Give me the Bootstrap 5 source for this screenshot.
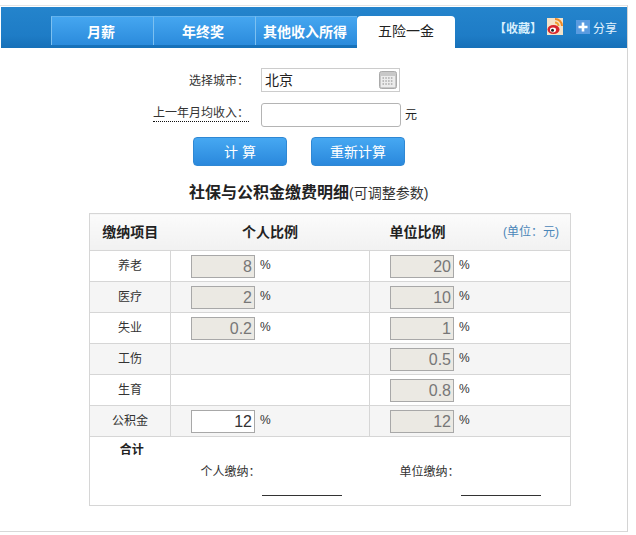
<!DOCTYPE html>
<html lang="zh-CN">
<head>
<meta charset="utf-8">
<title>五险一金</title>
<link href="https://cdn.jsdelivr.net/npm/bootstrap@5.3.0/dist/css/bootstrap.min.css" rel="stylesheet">
<style>
html,body{background:#fff}
body{margin:0;font-family:"Liberation Sans","Noto Sans CJK SC",sans-serif;font-size:12px;color:#333;line-height:1.2}
.colon{font-family:"Noto Sans CJK TC",sans-serif}
.frame{width:628px;height:527px;margin-top:5px;border-top:1px solid #e4e4e4;border-right:1px solid #d4d4d4;border-bottom:1px solid #d8d8d8;padding-top:1px}
.topbar{margin-left:1px;height:41px;background:linear-gradient(#2484cc,#1e7cc6 70%,#1670b8);padding-left:50px;align-items:flex-end}
.tabset{gap:0;border:0;flex-wrap:nowrap}
.tabitem{width:102px;height:29px;background:linear-gradient(#45a6f0,#2b8bdc);border-left:1px solid #7cc0f0;border-top:1px solid #62b2ee;color:#fff;font-weight:700;font-size:14px;display:flex;align-items:center;justify-content:center;padding:2px 3px 0 0}
.tabon{width:98px;height:32px;background:#fff;border:0;border-radius:4px 4px 0 0;color:#222;font-weight:400;font-size:14px;padding:0 0 1px}
.tools{margin-left:auto;margin-right:10px;align-self:center;color:#fff;gap:0;margin-top:-1px}
.fav{font-weight:700;color:#d8effd;margin:4px 5px 0 0}
.weibo{margin-right:13px}
.share{margin:4px 0 0 3px;color:#e4f3fd}
.fieldrow{display:flex;align-items:center}
.rowcity{margin-top:20px}
.rowincome{margin-top:11px}
.fieldlabel{width:249px;text-align:right;font-size:12px;color:#333;margin-right:12px}
.labelcity{padding-top:2px}
.labelincome{margin-top:-4px}
.dotted{border-bottom:1px dotted #111;padding-bottom:1px}
.cityfield{width:139px;height:24px;border:1px solid #ccc;background:#fff;display:flex;align-items:center;justify-content:space-between;padding:0 2px 0 3px;font-size:14px;color:#222}
.incomefield{width:140px;height:24px;min-height:0;border:1px solid #b4b4b4;border-radius:3px;padding:0;box-shadow:none}
.unit{margin-left:4px;font-size:12px;color:#222}
.calcbtn{width:94px;height:29px;padding:0;border:1px solid #2f88d4;border-radius:4px;background:linear-gradient(#46a8f2,#2a88dc);color:#fff;font-size:14px;line-height:1}
.calcgap{gap:24px;margin:10px 0 0 193px}
.sectitle{margin:17px 0 0 189px;font-size:16px;font-weight:700;color:#222;line-height:20px;height:20px;white-space:nowrap}
.sectitle span{font-size:14px;font-weight:400;color:#333}
.detail{width:481px;margin:10px 0 0 89px;border-collapse:collapse;table-layout:fixed;--bs-table-bg:transparent;--bs-table-border-color:#d6d6d6}
.c1{width:81px}
.c2{width:199px}
.c3{width:201px}
.detail>tbody>tr>td,.detail>thead>tr>th{padding:0;border:1px solid #d6d6d6;color:#333;vertical-align:middle;box-shadow:none}
.detail>thead>tr>th{height:37px;background:linear-gradient(#fbfbfb,#f1f1f1);font-size:14px;font-weight:700;color:#222;text-align:center;border-left:0;border-right:0}
.detail>thead>tr>th:first-child{border-left:1px solid #d6d6d6}
.detail>thead>tr>th:last-child{border-right:1px solid #d6d6d6}
.detail>tbody>tr.rateline>td{height:31px}
.detail>tbody>tr.rateline>td:first-child{text-align:center;font-size:12px}
.detail>tbody>tr.shade>td{background:#f5f5f5}
.headsplit{display:flex;justify-content:space-between;align-items:center;padding:0 11px 0 20px}
.unitnote{font-weight:400;font-size:12px;color:#4a86b8}
.cellrate{display:flex;align-items:center;padding-left:20px;font-size:12px;color:#333}
.rate{width:64px;height:23px;border:1px solid #a8a8a8;background:#ebe9e3;color:#777;text-align:right;font-size:16px;line-height:21px;padding:2px 2px 0 0;font-family:"Liberation Sans",sans-serif;border-radius:0;outline:0}
.rateon{background:#fff;color:#333}
.pct{margin:-1px 0 0 5px}
.detail>tbody>tr.sumline>td{height:69px;vertical-align:top;border-left:0;border-right:0}
.detail>tbody>tr.sumline>td:first-child{border-left:1px solid #d6d6d6;text-align:center;font-weight:700;padding:6px 0 0 3px;color:#222}
.detail>tbody>tr.sumline>td:last-child{border-right:1px solid #d6d6d6}
.paid{padding-top:27px;font-size:12px;color:#333}
.paidname{width:90px;text-align:right}
.paidline{width:80px;height:1px;background:#333;margin:16px 0 0 91px}
</style>
</head>
<body>
<div class="frame">
  <div class="topbar d-flex">
    <ul class="nav tabset">
      <li class="tabitem">月薪</li>
      <li class="tabitem">年终奖</li>
      <li class="tabitem">其他收入所得</li>
      <li class="tabitem tabon">五险一金</li>
    </ul>
    <div class="tools d-flex align-items-center">
      <span class="fav">【收藏】</span>
      <svg class="weibo" width="16" height="17" viewBox="0 0 16 17"><rect width="16" height="17" fill="#f3e2c8"/><path d="M8 1a7 7 0 0 1 7 7" fill="none" stroke="#f08a24" stroke-width="2"/><path d="M8 4.500a3.500 3.500 0 0 1 3.500 3.500" fill="none" stroke="#f0a030" stroke-width="2"/><ellipse cx="6.500" cy="11.500" rx="6" ry="4.500" fill="#d8262c"/><ellipse cx="6" cy="12" rx="3" ry="2.400" fill="#fff"/><circle cx="5.500" cy="12.300" r="1.500" fill="#222"/></svg>
      <svg width="14" height="14" viewBox="0 0 14 14"><rect width="14" height="14" fill="#5a9be0"/><path d="M7 2.500v9M2.500 7h9" stroke="#fff" stroke-width="2.600"/></svg>
      <span class="share">分享</span>
    </div>
  </div>

  <div class="fieldrow rowcity">
    <label class="fieldlabel labelcity">选择城市<span class="colon">：</span></label>
    <div class="cityfield">北京
      <svg width="18" height="18" viewBox="0 0 18 18"><rect x=".5" y=".5" width="17" height="17" rx="2" fill="#c8c8c8" stroke="#aaa"/><rect x="2" y="5" width="14" height="11" fill="#ececec"/><path d="M3.500 7h11M3.500 10h11M3.500 13h11" stroke="#888" stroke-width="1.200" stroke-dasharray="1.500 1.300"/></svg>
    </div>
  </div>
  <div class="fieldrow rowincome">
    <label class="fieldlabel labelincome"><span class="dotted">上一年月均收入<span class="colon">：</span></span></label>
    <input class="form-control incomefield" type="text" aria-label="上一年月均收入">
    <span class="unit">元</span>
  </div>
  <div class="d-flex calcgap">
    <button class="btn calcbtn" type="button">计 算</button>
    <button class="btn calcbtn" type="button">重新计算</button>
  </div>

  <h2 class="sectitle">社保与公积金缴费明细<span>(可调整参数)</span></h2>

  <table class="table detail mb-0">
    <colgroup><col class="c1"><col class="c2"><col class="c3"></colgroup>
    <thead>
      <tr><th>缴纳项目</th><th>个人比例</th><th><div class="headsplit"><span>单位比例</span><span class="unitnote">(单位<span class="colon">：</span>元)</span></div></th></tr>
    </thead>
    <tbody>
      <tr class="rateline"><td>养老</td><td><div class="cellrate"><input class="rate" value="8" disabled><span class="pct">%</span></div></td><td><div class="cellrate"><input class="rate" value="20" disabled><span class="pct">%</span></div></td></tr>
      <tr class="rateline shade"><td>医疗</td><td><div class="cellrate"><input class="rate" value="2" disabled><span class="pct">%</span></div></td><td><div class="cellrate"><input class="rate" value="10" disabled><span class="pct">%</span></div></td></tr>
      <tr class="rateline"><td>失业</td><td><div class="cellrate"><input class="rate" value="0.2" disabled><span class="pct">%</span></div></td><td><div class="cellrate"><input class="rate" value="1" disabled><span class="pct">%</span></div></td></tr>
      <tr class="rateline shade"><td>工伤</td><td></td><td><div class="cellrate"><input class="rate" value="0.5" disabled><span class="pct">%</span></div></td></tr>
      <tr class="rateline"><td>生育</td><td></td><td><div class="cellrate"><input class="rate" value="0.8" disabled><span class="pct">%</span></div></td></tr>
      <tr class="rateline shade"><td>公积金</td><td><div class="cellrate"><input class="rate rateon" value="12"><span class="pct">%</span></div></td><td><div class="cellrate"><input class="rate" value="12" disabled><span class="pct">%</span></div></td></tr>
      <tr class="sumline"><td>合计</td><td><div class="paid"><div class="paidname">个人缴纳<span class="colon">：</span></div><div class="paidline"></div></div></td><td><div class="paid"><div class="paidname">单位缴纳<span class="colon">：</span></div><div class="paidline"></div></div></td></tr>
    </tbody>
  </table>
</div>
</body>
</html>
